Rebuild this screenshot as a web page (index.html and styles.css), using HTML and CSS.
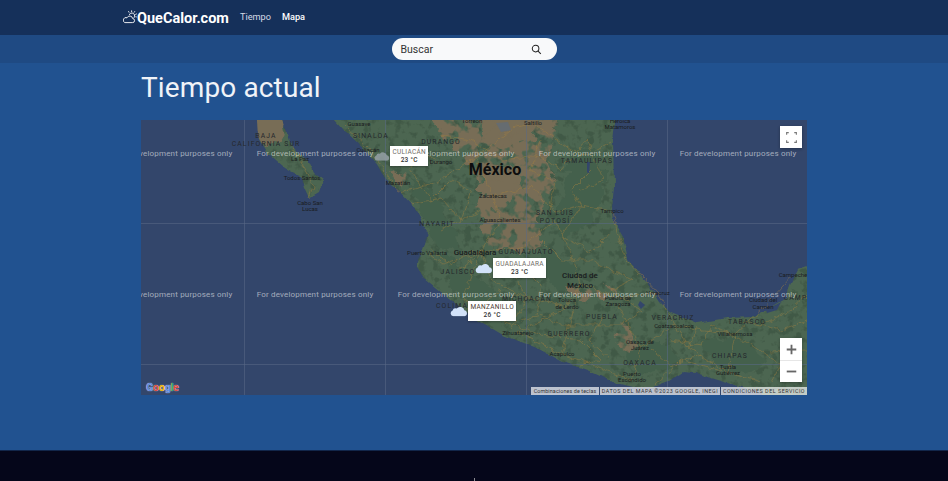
FILE: index.html
```html
<!DOCTYPE html>
<html lang="es">
    <head>
        <meta charset="utf-8">
        <title>QueCalor.com - Mapa</title>
        <link rel="stylesheet" href="styles.css">
    </head>
    <body>
        <nav class="topbar">
            <a class="brand" href="#">
                <svg class="brand-icon" viewBox="0 0 14 14" width="14" height="14">
                    <path d="M1.8 12.6h7.6a2 2 0 0 0 .3-4 3 3 0 0 0-5.7-.8 2.5 2.5 0 0 0-2.2 4.8z" fill="none" stroke="#fff" stroke-width=".9"/>
                    <path d="M6.2 4.9a2.8 2.8 0 0 1 5.3 1.9c-.2.6-.5 1-.9 1.4" fill="none" stroke="#fff" stroke-width=".9"/>
                    <path d="M8.6.4v1.7M5.4 1.2l.8 1.4M11.9 1.2l-.9 1.4M13.8 3.8l-1.5.7M13.8 7l-1.4-.3" fill="none" stroke="#fff" stroke-width=".9"/>
                </svg>
                <span>QueCalor.com</span>
            </a>
            <a class="nav-link" href="#">Tiempo</a>
            <a class="nav-link active" href="#">Mapa</a>
        </nav>

        <div class="searchbar">
            <form class="search">
                <span class="search-text">Buscar</span>
                <svg viewBox="0 0 12 12" width="11" height="11">
                    <circle cx="5" cy="5" r="3.6" fill="none" stroke="#222" stroke-width="1.1"/>
                    <path d="M7.7 7.7l3 3" stroke="#222" stroke-width="1.2"/>
                </svg>
            </form>
        </div>

        <main class="content">
            <h1>Tiempo actual</h1>

            <div class="map">
                <svg class="map-base" viewBox="0 0 666 275" width="666" height="275">
                    <defs>
                        <filter id="coast" x="-5%" y="-5%" width="110%" height="110%" color-interpolation-filters="sRGB">
                            <feTurbulence type="fractalNoise" baseFrequency=".09" numOctaves="3" seed="4" result="n"/>
                            <feDisplacementMap in="SourceGraphic" in2="n" scale="5" xChannelSelector="R" yChannelSelector="G"/>
                        </filter>
                        <filter id="rough" x="-10%" y="-10%" width="120%" height="120%" color-interpolation-filters="sRGB">
                            <feTurbulence type="fractalNoise" baseFrequency=".07" numOctaves="3" seed="9" result="n"/>
                            <feDisplacementMap in="SourceGraphic" in2="n" scale="16" xChannelSelector="R" yChannelSelector="G"/>
                        </filter>
                        <filter id="patchy" x="-10%" y="-10%" width="120%" height="120%" color-interpolation-filters="sRGB">
                            <feTurbulence type="fractalNoise" baseFrequency=".08" numOctaves="3" seed="21" result="n"/>
                            <feDisplacementMap in="SourceGraphic" in2="n" scale="16" xChannelSelector="R" yChannelSelector="G" result="d"/>
                            <feColorMatrix in="n" type="matrix" values="0 0 0 0 0  0 0 0 0 0  0 0 0 0 0  8 0 0 0 -3.2" result="m"/>
                            <feComposite in="d" in2="m" operator="in"/>
                        </filter>
                        <filter id="mottle" x="0" y="0" width="100%" height="100%" color-interpolation-filters="sRGB">
                            <feTurbulence type="fractalNoise" baseFrequency=".13" numOctaves="3" seed="3" result="n"/>
                            <feColorMatrix in="n" type="matrix" values="0 0 0 0 .24  0 0 0 0 .33  0 0 0 0 .26  6 0 0 0 -3.1" result="m"/>
                            <feComposite in="m" in2="SourceAlpha" operator="in"/>
                        </filter>
                        <filter id="wiggle" x="-5%" y="-5%" width="110%" height="110%" color-interpolation-filters="sRGB">
                            <feTurbulence type="fractalNoise" baseFrequency=".14" numOctaves="2" seed="6" result="n"/>
                            <feDisplacementMap in="SourceGraphic" in2="n" scale="7" xChannelSelector="R" yChannelSelector="G"/>
                        </filter>
                        <clipPath id="land-clip">
                            <path d="M115 -15L137 -15L147 20L157 33L167 40L173 53L182 60L178 72L168 78L163 67L160 57L143 47L127 33L117 17Z"/>
                            <path d="M180 -15L203 10L217 23L233 40L245 60L257 70L273 87L287 113L283 123L275 145L283 158L300 172L313 182L333 198L362 215L396 228L422 242L446 250L472 262L496 268L512 267L528 261L542 252L556 253L569 258L590 264L619 272L630 290L690 290L690 140L657 150L649 165L646 178L629 188L612 197L586 198L556 203L529 192L519 182L506 162L487 140L482 117L472 100L471 90L473 67L472 20L476 -15Z"/>
                        </clipPath>
                    </defs>

                    <rect width="666" height="275" fill="#33466b"/>

                    <!-- land -->
                    <g class="coastline">
                        <path class="land" d="M115 -15L137 -15L147 20L157 33L167 40L173 53L182 60L178 72L168 78L163 67L160 57L143 47L127 33L117 17Z"/>
                        <path class="land" d="M180 -15L203 10L217 23L233 40L245 60L257 70L273 87L287 113L283 123L275 145L283 158L300 172L313 182L333 198L362 215L396 228L422 242L446 250L472 262L496 268L512 267L528 261L542 252L556 253L569 258L590 264L619 272L630 290L690 290L690 140L657 150L649 165L646 178L629 188L612 197L586 198L556 203L529 192L519 182L506 162L487 140L482 117L472 100L471 90L473 67L472 20L476 -15Z"/>
                    </g>

                    <g clip-path="url(#land-clip)">
                        <rect class="mottle" width="666" height="275"/>

                        <!-- sierras -->
                        <g class="sierras">
                            <path d="M430 32L450 26L462 50L462 80L446 102L424 118L414 106L424 70Z"/>
                            <path d="M268 56L296 76L310 100L322 130L298 128L280 96Z"/>
                            <path d="M300 135L340 160L372 188L352 194L312 170Z"/>
                            <path d="M560 222L600 218L626 240L600 254L572 244Z"/>
                            <path d="M405 130L440 150L420 170L395 150Z"/>
                            <path d="M480 225L530 225L540 245L500 255Z"/>
                        </g>

                        <!-- dry plateau -->
                        <g class="dry-solid">
                            <path d="M115 -15L137 -15L145 18L136 25L122 26L117 17Z"/>
                            <path d="M345 -10L395 -10L392 20L362 30L340 18Z"/>
                            <path d="M345 48L372 46L384 70L356 90L338 70Z"/>
                        </g>
                        <g class="dry">
                            <path d="M285 -15L420 -15L412 20L408 42L416 62L405 82L397 100L402 122L393 135L372 128L352 132L340 118L345 100L333 90L343 72L333 50L317 33L300 15Z"/>
                            <path d="M424 166L444 170L462 163L478 172L470 181L448 178L430 176Z"/>
                            <path d="M478 204L490 205L498 228L488 232L474 222Z"/>
                            <path d="M250 50L268 58L262 74Z"/>
                        </g>

                        <path class="lake" d="M355 3L367 2L370 10L360 12Z"/>

                        <!-- water on land -->
                        <path class="lagoon" d="M542 255L556 254L570 258L566 261L548 259Z"/>
                        <path class="lagoon" d="M499 181L504 185L500 189L497 185Z"/>
                        <path class="lagoon" d="M446 42L449 42L448 54L446 52Z"/>
                        <path class="lagoon" d="M625 190L640 182L636 190L626 193Z"/>
                    </g>

                    <!-- roads -->
                    <g class="roads">
                        <path d="M150 26L158 38L166 52L172 66L168 78"/>
                        <path d="M205 6L228 28L250 62L258 72L296 62L334 38L352 76L360 100L340 132L302 144L286 133"/>
                        <path d="M334 38L372 8L392 3L430 30L446 36L470 22"/>
                        <path d="M352 76L392 66L414 92L440 86L471 91L478 120L486 140L517 173L533 206L594 214L622 188L652 155"/>
                        <path d="M340 132L380 128L414 100L430 132L439 164L477 178L517 173"/>
                        <path d="M340 132L350 160L386 178L426 187L439 164L421 234"/>
                        <path d="M426 187L377 213L421 234L491 260L499 228L477 184"/>
                        <path d="M499 228L533 206L548 228L587 253L594 214"/>
                        <path d="M587 253L620 262M512 267L540 240L587 253"/>
                        <path d="M317 151L340 132L322 176L333 198M370 150L386 178L370 208"/>
                        <path d="M270 84L300 78L320 100L340 90M400 20L390 50L414 62L408 92"/>
                        <path d="M450 50L430 70L440 86L420 116L452 132L470 112"/>
                        <path d="M462 196L448 220L470 240M556 205L548 228M600 200L640 210L666 200M630 232L666 230"/>
                        <path d="M300 44L280 30L268 50L290 80L310 60L330 70L320 100L300 110"/>
                        <path d="M300 15L330 20L360 40L400 36L420 50L446 20L462 60L440 70"/>
                        <path d="M400 120L420 140L450 140L470 150L490 160L470 170L500 190L480 205L450 205L420 205L400 195L380 200"/>
                        <path d="M530 220L560 225L570 205L610 225L640 245L660 220M620 205L650 190L666 175"/>
                        <path d="M360 170L340 185L360 200L400 215L440 220L460 240L440 245"/>
                        <path d="M385 150L400 165L395 195M290 130L310 145L330 130"/>
                        <path d="M510 230L530 245L560 235M630 262L640 245"/>
                    </g>

                    <!-- tile seams and watermark -->
                    <path class="seams" d="M103.5 0V275M244.5 0V275M385.5 0V275M526.5 0V275M0 103.5H666M0 244.5H666"/>

                    <g class="places">
                        <text x="218" y="6">Guasave</text>
                        <text x="227" y="32">Culiacán</text>
                        <text x="331" y="3">Torreón</text>
                        <text x="392" y="5">Saltillo</text>
                        <text x="479" y="3">Heroica</text>
                        <text x="479" y="9">Matamoros</text>
                        <text x="159" y="41">La Paz</text>
                        <text x="161" y="60">Todos Santos</text>
                        <text x="169" y="85">Cabo San</text>
                        <text x="169" y="91">Lucas</text>
                        <text x="257" y="65">Mazatlán</text>
                        <text x="300" y="44">Durango</text>
                        <text x="352" y="78">Zacatecas</text>
                        <text x="359" y="102">Aguascalientes</text>
                        <text x="471" y="93">Tampico</text>
                        <text x="286" y="135">Puerto Vallarta</text>
                        <text x="426" y="182">Toluca</text>
                        <text x="426" y="189">de Lerdo</text>
                        <text x="477" y="180">Puebla de</text>
                        <text x="477" y="186">Zaragoza</text>
                        <text x="517" y="175">Veracruz</text>
                        <text x="533" y="208">Coatzacoalcos</text>
                        <text x="594" y="216">Villahermosa</text>
                        <text x="622" y="182">Ciudad del</text>
                        <text x="622" y="189">Carmen</text>
                        <text x="652" y="157">Campeche</text>
                        <text x="377" y="215">Zihuatanejo</text>
                        <text x="421" y="236">Acapulco</text>
                        <text x="499" y="224">Oaxaca de</text>
                        <text x="499" y="230">Juárez</text>
                        <text x="491" y="256">Puerto</text>
                        <text x="491" y="262">Escondido</text>
                        <text x="587" y="249">Tuxtla</text>
                        <text x="587" y="255">Gutiérrez</text>
                    </g>
                    <g class="states">
                        <text x="125" y="18">BAJA</text>
                        <text x="125" y="26">CALIFORNIA SUR</text>
                        <text x="230" y="18">SINALOA</text>
                        <text x="300" y="24">DURANGO</text>
                        <text x="446" y="43">TAMAULIPAS</text>
                        <text x="414" y="95">SAN LUIS</text>
                        <text x="414" y="103">POTOSÍ</text>
                        <text x="296" y="106">NAYARIT</text>
                        <text x="385" y="134">GUANAJUATO</text>
                        <text x="317" y="154">JALISCO</text>
                        <text x="311" y="188">COLIMA</text>
                        <text x="386" y="181">MICHOACÁN</text>
                        <text x="461" y="199">PUEBLA</text>
                        <text x="532" y="200">VERACRUZ</text>
                        <text x="606" y="204">TABASCO</text>
                        <text x="428" y="216">GUERRERO</text>
                        <text x="499" y="245">OAXACA</text>
                        <text x="589" y="238">CHIAPAS</text>
                        <text x="657" y="180">CAMPE</text>
                    </g>
                    <text class="city" x="334" y="135">Guadalajara</text>
                    <text class="city" x="439" y="158">Ciudad de</text>
                    <text class="city" x="439" y="168">México</text>
                    <text class="country" x="354" y="55">México</text>

                    <g class="watermark">
                        <text x="33" y="36">For development purposes only</text>
                        <text x="174" y="36">For development purposes only</text>
                        <text x="315" y="36">For development purposes only</text>
                        <text x="456" y="36">For development purposes only</text>
                        <text x="597" y="36">For development purposes only</text>
                        <text x="33" y="177">For development purposes only</text>
                        <text x="174" y="177">For development purposes only</text>
                        <text x="315" y="177">For development purposes only</text>
                        <text x="456" y="177">For development purposes only</text>
                        <text x="597" y="177">For development purposes only</text>
                    </g>
                </svg>

                <div class="marker marker-culiacan">
                    <svg class="cloud cloud-grey" viewBox="0 0 20 12" width="16" height="10"><use href="#cloud-shape"/></svg>
                    <div class="marker-label"><span class="marker-city">CULIACÁN</span><b>23 °C</b></div>
                </div>
                <div class="marker marker-guadalajara">
                    <svg class="cloud" viewBox="0 0 20 12" width="18" height="12"><use href="#cloud-shape"/></svg>
                    <div class="marker-label"><span class="marker-city">GUADALAJARA</span><b>23 °C</b></div>
                </div>
                <div class="marker marker-manzanillo">
                    <svg class="cloud" viewBox="0 0 20 12" width="18" height="12"><use href="#cloud-shape"/></svg>
                    <div class="marker-label"><span class="marker-city dark">MANZANILLO</span><b>26 °C</b></div>
                </div>

                <button class="map-btn fullscreen" type="button" aria-label="Pantalla completa">
                    <svg viewBox="0 0 12 12" width="11" height="11">
                        <path d="M.7 3V.7H3M9 .7h2.3V3M11.3 9v2.3H9M3 11.3H.7V9" fill="none" stroke="#777" stroke-width="1.2"/>
                    </svg>
                </button>
                <div class="zoom-ctl">
                    <button class="map-btn" type="button" aria-label="Acercar">
                        <svg viewBox="0 0 12 12" width="11" height="11"><path d="M6 .8v10.4M.8 6h10.4" stroke="#666" stroke-width="2"/></svg>
                    </button>
                    <button class="map-btn" type="button" aria-label="Alejar">
                        <svg viewBox="0 0 12 12" width="11" height="11"><path d="M.8 6h10.4" stroke="#666" stroke-width="2"/></svg>
                    </button>
                </div>

                <div class="google-logo"><span class="g-blue">G</span><span class="g-red">o</span><span class="g-yellow">o</span><span class="g-blue">g</span><span class="g-green">l</span><span class="g-red">e</span></div>

                <div class="attribution">
                    <span class="attr-keys">Combinaciones de teclas</span>
                    <span class="attr-data">DATOS DEL MAPA ©2023 GOOGLE, INEGI</span>
                    <span class="attr-terms">CONDICIONES DEL SERVICIO</span>
                </div>
            </div>
        </main>

        <footer class="footer"><span class="footer-tick"></span></footer>

        <svg class="defs" width="0" height="0">
            <symbol id="cloud-shape" viewBox="0 0 20 12">
                <path d="M3.8 11.8a3.3 3.3 0 0 1-.9-6.4 3.4 3.4 0 0 1 4.5-2.2A5 5 0 0 1 16 5.2a3.4 3.4 0 0 1 .6 6.6z"/>
            </symbol>
        </svg>
    </body>
</html>
```

FILE: styles.css
```css
* { box-sizing: border-box; }

html, body { height: 100%; }

body {
    margin: 0;
    display: flex;
    flex-direction: column;
    background: #215290;
    color: #fff;
    font-family: Roboto, "Liberation Sans", sans-serif;
    overflow: hidden;
}

a { color: #fff; text-decoration: none; }

.topbar {
    height: 35px;
    flex: none;
    display: flex;
    align-items: center;
    gap: 11px;
    padding-left: 123px;
    background: #15305a;
}

.brand {
    display: flex;
    align-items: center;
    font-size: 14.5px;
    font-weight: 700;
    margin-top: 1px;
}
.brand-icon { margin-top: -3px; flex: none; }

.nav-link {
    font-size: 9.2px;
    margin-top: -2px;
    color: #d5dbe6;
}
.nav-link.active { color: #fff; font-weight: 500; }

.searchbar {
    height: 28px;
    flex: none;
    display: flex;
    justify-content: center;
    padding-top: 3px;
    background: #1f4a83;
}

.search {
    width: 165px;
    height: 22px;
    display: flex;
    align-items: center;
    justify-content: space-between;
    padding: 0 15px 0 9px;
    border-radius: 11px;
    background: #f8f9fa;
    color: #333;
}
.search-text { font-size: 10.5px; }

.content {
    flex: 1;
    width: 666px;
    margin: 0 auto;
}

h1 {
    margin: 7px 0 15px;
    font-size: 28px;
    line-height: 35px;
    font-weight: 400;
    letter-spacing: .13px;
    color: #f0f3f8;
}

.map {
    position: relative;
    width: 666px;
    height: 275px;
    overflow: hidden;
}

.map-base { display: block; }

.coastline { filter: url(#coast); }
.land { fill: #4c6651; }
.mottle { fill: #000; filter: url(#mottle); opacity: .7; }
.sierras { fill: #44604c; filter: url(#rough); }
.dry { fill: #786d56; filter: url(#patchy); }
.dry-solid { fill: #786d56; filter: url(#rough); }
.lake { fill: #666c70; }
.lagoon { fill: #33466b; }

.roads {
    fill: none;
    stroke: #a5823f;
    stroke-width: .6;
    opacity: .7;
    filter: url(#wiggle);
}

.seams {
    fill: none;
    stroke: #5a6987;
    stroke-width: 1;
    opacity: .55;
}

.places text,
.states text,
.city,
.country {
    text-anchor: middle;
    fill: #1a1c1e;
}

.places text { font-size: 6px; }

.states text {
    font-size: 6.8px;
    letter-spacing: 1.15px;
    fill: #25282c;
}

.city { font-size: 8px; font-weight: 500; }

.country { font-size: 16px; font-weight: 700; fill: #0c0d0e; }

.watermark text {
    font-size: 8px;
    text-anchor: middle;
    fill: rgba(255, 255, 255, .55);
    letter-spacing: .18px;
}

.marker {
    position: absolute;
    display: flex;
    align-items: center;
}
.marker-culiacan { left: 233px; top: 26px; }
.marker-guadalajara { left: 334px; top: 138px; }
.marker-manzanillo { left: 309px; top: 181px; }

.cloud { fill: #d2e2f9; flex: none; }
.cloud-grey { fill: #9aa4ab; opacity: .8; }

.marker-label {
    display: flex;
    flex-direction: column;
    align-items: center;
    padding: 2px 2.5px;
    background: #fff;
    box-shadow: 0 1px 2px rgba(0, 0, 0, .3);
    font-size: 6.5px;
    line-height: 8px;
    letter-spacing: .3px;
    color: #333;
}
.marker-label b { font-weight: 500; }
.marker-city { color: #6f6a66; }
.marker-city.dark { color: #4a3a30; }

.map-btn {
    display: flex;
    align-items: center;
    justify-content: center;
    width: 22px;
    height: 22px;
    padding: 0;
    border: 0;
    background: #fff;
}

.fullscreen {
    position: absolute;
    top: 6px;
    right: 5px;
    box-shadow: 0 1px 3px rgba(0, 0, 0, .3);
}

.zoom-ctl {
    position: absolute;
    top: 218px;
    right: 5px;
    background: #fff;
    box-shadow: 0 1px 3px rgba(0, 0, 0, .3);
}
.zoom-ctl .map-btn + .map-btn { border-top: 1px solid #e6e6e6; }

.google-logo {
    position: absolute;
    left: 5px;
    bottom: 1px;
    font-size: 10.5px;
    font-weight: 700;
    line-height: 13px;
    letter-spacing: -.1px;
    text-shadow: 0 0 1px #fff;
}
.g-blue { color: #5a8ae0; }
.g-red { color: #dc4a3d; }
.g-yellow { color: #f0b400; }
.g-green { color: #2ea34f; }

.attribution {
    position: absolute;
    right: 0;
    bottom: 0;
    display: flex;
    gap: 1px;
    height: 8px;
    font-size: 5.4px;
    line-height: 8px;
    color: #333;
}
.attribution span {
    display: block;
    text-align: center;
    background: rgba(255, 255, 255, .68);
    white-space: nowrap;
    overflow: hidden;
    letter-spacing: .5px;
}
.attribution .attr-keys { width: 68px; letter-spacing: .1px; }
.attr-data { width: 120px; }
.attr-terms { width: 86px; }

.footer {
    height: 31px;
    flex: none;
    display: flex;
    justify-content: center;
    padding-top: 27px;
    background: #05061a;
    border-top: 1px solid #12264a;
}
.footer-tick { width: 1px; height: 3px; background: #8a8a90; }

.defs { position: absolute; }
```
